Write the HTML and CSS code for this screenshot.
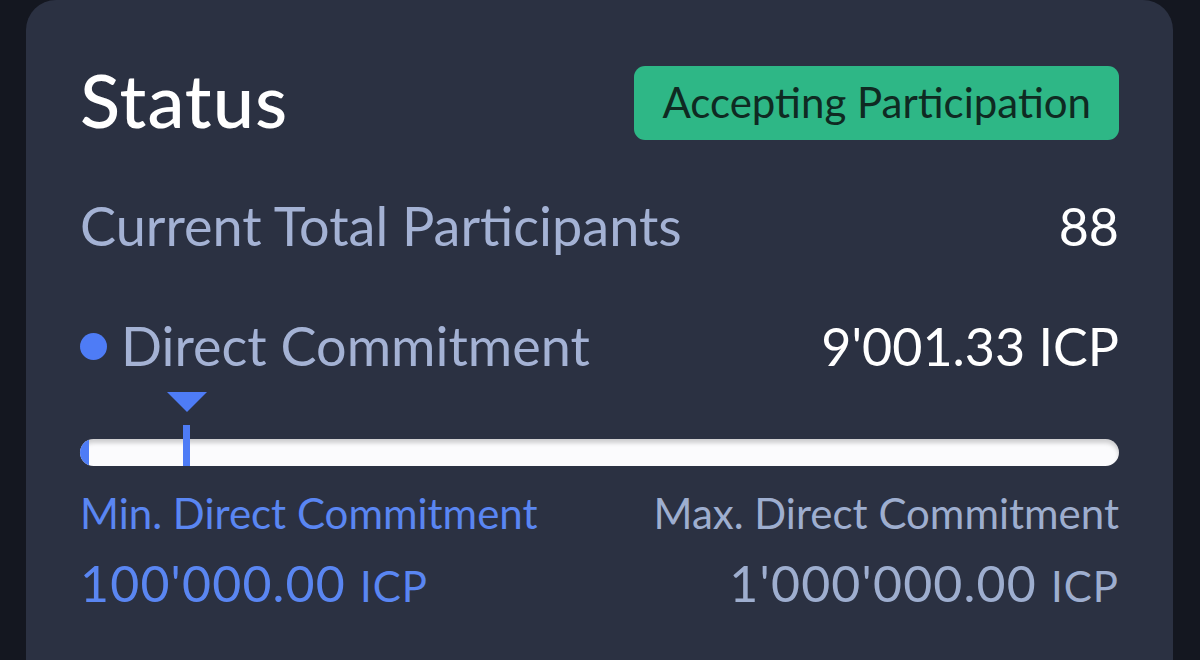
FILE: index.html
```html
<!DOCTYPE html>
<html>
<head>
<meta charset="utf-8">
<link rel="stylesheet" href="styles.css">
</head>
<body>
<div class="card">
  <div class="header">
    <h1 class="title">Status</h1>
    <span class="badge">Accepting Participation</span>
  </div>
  <div class="row row-participants">
    <span class="label">Current Total Participants</span>
    <span class="value">88</span>
  </div>
  <div class="row row-commit">
    <span class="label label-dot"><span class="dot"></span>Direct Commitment</span>
    <span class="value value-commit">9'001.33 ICP</span>
  </div>
  <div class="progress">
    <div class="marker" style="left: 10%">
      <span class="marker-tri"></span>
      <span class="marker-line"></span>
    </div>
    <div class="bar"><div class="bar-fill" style="width: 0.9%"></div></div>
  </div>
  <div class="limits">
    <div class="limit limit-min">
      <span class="limit-label">Min. Direct Commitment</span>
      <span class="limit-value">100'000.00 <span class="unit">ICP</span></span>
    </div>
    <div class="limit limit-max">
      <span class="limit-label">Max. Direct Commitment</span>
      <span class="limit-value">1'000'000.00 <span class="unit">ICP</span></span>
    </div>
  </div>
</div>
</body>
</html>
```
FILE: styles.css
```css
html, body {
  margin: 0;
  padding: 0;
}
body {
  background: #141720;
  width: 1200px;
  height: 660px;
  overflow: hidden;
  font-family: "Lato", "Open Sans", sans-serif;
}
.card {
  margin-left: 26px;
  width: 1147px;
  height: 660px;
  box-sizing: border-box;
  background: #2b3142;
  border-radius: 30px 30px 0 0;
  padding: 66px 54px 0 54px;
}
.header {
  display: flex;
  justify-content: space-between;
  align-items: center;
  height: 74px;
}
.title {
  margin: 0;
  font-size: 74px;
  line-height: 74px;
  font-weight: 500;
  letter-spacing: 1px;
  color: #ffffff;
  padding-bottom: 6px;
}
.badge {
  height: 74px;
  line-height: 72px;
  padding: 0 28px;
  background: #2eb786;
  color: #0f2a22;
  font-size: 42px;
  border-radius: 11px;
  box-sizing: border-box;
}
.row {
  display: flex;
  justify-content: space-between;
  align-items: center;
  height: 60px;
  line-height: 60px;
}
.row-participants {
  margin-top: 56px;
}
.row-commit {
  margin-top: 60px;
}
.label {
  font-size: 54px;
  color: #a4b2d4;
}
.label-dot {
  display: flex;
  align-items: center;
  gap: 14px;
}
.dot {
  width: 27px;
  height: 27px;
  border-radius: 50%;
  background: #4e7cf6;
  flex: none;
}
.value {
  font-size: 52px;
  color: #ffffff;
}
.progress {
  position: relative;
  margin-top: 16px;
  height: 74px;
}
.marker {
  position: absolute;
  top: 0;
  width: 40px;
  height: 74px;
  margin-left: -17px;
  display: flex;
  flex-direction: column;
  align-items: center;
  z-index: 2;
}
.marker-tri {
  width: 0;
  height: 0;
  border-left: 20px solid transparent;
  border-right: 20px solid transparent;
  border-top: 20px solid #4e7cf6;
}
.marker-line {
  margin-top: 13px;
  width: 7px;
  height: 41px;
  background: #4e7cf6;
}
.bar {
  position: absolute;
  left: 0;
  right: 0;
  bottom: 0;
  height: 27px;
  border-radius: 14px;
  background: #fbfbfd;
  box-shadow: inset 0 4px 4px rgba(0, 0, 0, 0.18);
  overflow: hidden;
}
.bar-fill {
  height: 100%;
  background: #4e7cf6;
}
.limits {
  display: flex;
  justify-content: space-between;
  margin-top: 23px;
}
.limit {
  display: flex;
  flex-direction: column;
}
.limit-max {
  align-items: flex-end;
}
.limit-label {
  font-size: 42px;
  line-height: 48px;
}
.limit-value {
  margin-top: 18px;
  font-size: 50px;
  line-height: 56px;
  letter-spacing: 1.2px;
}
.unit {
  font-size: 42px;
  letter-spacing: 1px;
}
.limit-min {
  color: #5a86f2;
}
.limit-max {
  color: #9eaecf;
}
```
